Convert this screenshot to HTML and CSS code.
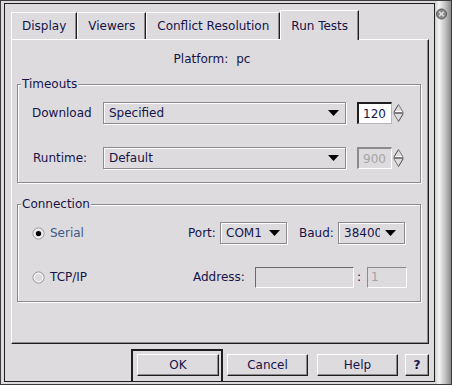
FILE: index.html
```html
<!DOCTYPE html>
<html lang="en">
<head>
    <meta charset="UTF-8">
    <title>Run Tests</title>
    <link rel="stylesheet" href="styles.css">
</head>
<body>
    <div class="window">
        <div class="frame">
            <div class="tabs">
                <div class="tab">Display</div>
                <div class="tab">Viewers</div>
                <div class="tab">Conflict Resolution</div>
                <div class="tab active">Run Tests</div>
            </div>

            <div class="panel">
                <div class="platform"><span>Platform:</span><span>pc</span></div>

                <fieldset class="group">
                    <legend>Timeouts</legend>
                    <div class="rows">
                        <div class="row">
                            <span class="label">Download</span>
                            <div class="combo wide">
                                <span class="value">Specified</span>
                                <svg class="arrow" width="11" height="6" viewBox="0 0 11 6"><path d="M0 0h11L5.5 6z"/></svg>
                            </div>
                            <div class="num">120</div>
                            <svg class="spin" width="11" height="20" viewBox="0 0 11 20">
                                <path d="M5.5 1.5L1 9" stroke="#4a4a4a" fill="none"/>
                                <path d="M5.5 1.5L10 9" stroke="#787878" fill="none"/>
                                <path d="M2 8.5h7" stroke="#fff"/>
                                <path d="M0.5 10h10" stroke="#1e1e1e"/>
                                <path d="M1 11l4.5 7.5" stroke="#787878" fill="none"/>
                                <path d="M10 11l-4.5 7.5" stroke="#4a4a4a" fill="none"/>
                            </svg>
                        </div>
                        <div class="row">
                            <span class="label runtime">Runtime:</span>
                            <div class="combo wide">
                                <span class="value">Default</span>
                                <svg class="arrow" width="11" height="6" viewBox="0 0 11 6"><path d="M0 0h11L5.5 6z"/></svg>
                            </div>
                            <div class="num off">900</div>
                            <svg class="spin" width="11" height="20" viewBox="0 0 11 20">
                                <path d="M5.5 1.5L1 9" stroke="#4a4a4a" fill="none"/>
                                <path d="M5.5 1.5L10 9" stroke="#787878" fill="none"/>
                                <path d="M2 8.5h7" stroke="#fff"/>
                                <path d="M0.5 10h10" stroke="#1e1e1e"/>
                                <path d="M1 11l4.5 7.5" stroke="#787878" fill="none"/>
                                <path d="M10 11l-4.5 7.5" stroke="#4a4a4a" fill="none"/>
                            </svg>
                        </div>
                    </div>
                </fieldset>

                <fieldset class="group connection">
                    <legend>Connection</legend>
                    <div class="rows">
                        <div class="row">
                            <div class="choice serial">
                                <svg class="radio" width="13" height="13" viewBox="0 0 13 13">
                                    <circle cx="6.5" cy="6.5" r="5.5" fill="none" stroke="#8c8a8c"/>
                                    <circle cx="6.5" cy="6.5" r="4.5" fill="none" stroke="#fff"/>
                                    <circle cx="6.5" cy="6.5" r="2.6" fill="#000"/>
                                </svg>
                                <span class="on">Serial</span>
                            </div>
                            <span class="lbl-port">Port:</span>
                            <div class="combo small">
                                <span class="value">COM1</span>
                                <svg class="arrow" width="11" height="6" viewBox="0 0 11 6"><path d="M0 0h11L5.5 6z"/></svg>
                            </div>
                            <span class="lbl-baud">Baud:</span>
                            <div class="combo small clip">
                                <span class="value">38400</span>
                                <svg class="arrow" width="11" height="6" viewBox="0 0 11 6"><path d="M0 0h11L5.5 6z"/></svg>
                            </div>
                        </div>
                        <div class="row">
                            <div class="choice tcp">
                                <svg class="radio" width="13" height="13" viewBox="0 0 13 13">
                                    <circle cx="6.5" cy="6.5" r="5.5" fill="none" stroke="#8c8a8c"/>
                                    <circle cx="6.5" cy="6.5" r="4.5" fill="none" stroke="#fff"/>
                                </svg>
                                <span>TCP/IP</span>
                            </div>
                            <span class="lbl-addr">Address:</span>
                            <div class="entry address"></div>
                            <span class="colon">:</span>
                            <div class="entry sub">1</div>
                        </div>
                    </div>
                </fieldset>
            </div>

            <div class="buttons">
                <div class="default">
                    <button class="btn">OK</button>
                </div>
                <button class="btn cancel">Cancel</button>
                <button class="btn help">Help</button>
                <button class="btn what">?</button>
            </div>
        </div>

        <div class="strip">
            <svg width="12" height="12" viewBox="0 0 12 12">
                <circle cx="5.5" cy="6" r="5" fill="#8a8a8a" stroke="#555"/>
                <path d="M3.2 3.7l4.6 4.6M7.8 3.7L3.2 8.3" stroke="#e4e4e4" stroke-width="1.4"/>
            </svg>
        </div>
    </div>
</body>
</html>
```

FILE: styles.css
```css
* {
    margin: 0;
    padding: 0;
    box-sizing: border-box;
}

body {
    background: #dedbde;
    color: #14144a;
    font-family: "DejaVu Sans", sans-serif;
    font-size: 12px;
    line-height: 14px;
}

.window {
    width: 452px;
    height: 385px;
    display: flex;
    border: 1px solid #3c3c3c;
    background: #dedbde;
}

.frame {
    width: 431px;
    margin: 2px 0 2px 3px;
    border: 1px solid #1e1e1e;
    display: flex;
    flex-direction: column;
}

.strip {
    flex: 1;
    padding: 7px 0 0 1px;
    background: linear-gradient(to right, #cfcfcf 0, #f4f4f4 4px, #c4c4c4 10px, #8a8a8a 100%);
}

.strip svg {
    display: block;
}

/* tabs */

.tabs {
    display: flex;
    align-items: flex-end;
    height: 29px;
    margin-top: 6px;
    padding-left: 6px;
}

.tab {
    height: 27px;
    padding: 6px 10px 0;
    border: 1px solid;
    border-color: #fff #1e1e1e transparent #fff;
    border-bottom: 0;
    box-shadow: inset -1px 0 #8c8a8c;
    white-space: nowrap;
}

.tab.active {
    height: 30px;
    margin-bottom: -1px;
    padding-top: 8px;
    position: relative;
    z-index: 1;
    background: #dedbde;
}

.panel {
    height: 305px;
    margin: 0 5px 0 6px;
    border: 1px solid;
    border-color: #fff #1e1e1e #1e1e1e #fff;
    box-shadow: inset -1px -1px #8c8a8c;
}

.platform {
    display: flex;
    justify-content: center;
    gap: 8px;
    margin-top: 12px;
    padding-right: 16px;
}

/* group boxes */

.group {
    margin: 11px 7px 0 5px;
    padding: 11px 0 13px;
    border: 1px solid #8c8a8c;
    box-shadow: inset 1px 1px #fff, 1px 1px #fff;
    min-width: 0;
}

.group legend {
    margin-left: 3px;
    padding: 0 1px;
    background: #dedbde;
}

.connection {
    margin-top: 14px;
}

.rows {
    padding-left: 14px;
}

.row {
    display: flex;
    align-items: center;
    height: 22px;
}

.row + .row {
    margin-top: 23px;
}

.connection .row + .row {
    margin-top: 22px;
}

.label {
    width: 71px;
}

.runtime {
    padding-left: 1px;
}

.combo {
    height: 22px;
    display: flex;
    align-items: center;
    gap: 6px;
    padding: 0 6px 0 5px;
    border: 1px solid #8c8a8c;
    box-shadow: inset 1px 1px #fff, 1px 1px #fff;
}

.combo .value {
    flex: 1;
    overflow: hidden;
    white-space: nowrap;
}

.combo .arrow {
    flex: none;
}

.clip {
    gap: 5px;
}

.clip .value {
    flex: none;
    width: 36px;
}

.wide {
    width: 243px;
}

.small {
    width: 67px;
}

.num {
    width: 35px;
    height: 22px;
    margin-left: 11px;
    padding: 3px 0 0 4px;
    background: #fff;
    border-style: solid;
    border-width: 2px 1px 1px 2px;
    border-color: #1e1e1e #b8b8b8 #b8b8b8 #1e1e1e;
}

.num.off {
    background: #dedbde;
    color: #a4a4a4;
    border-color: #8c8a8c #fff #fff #8c8a8c;
}

.spin {
    margin-left: 1px;
}

/* connection */

.choice {
    display: flex;
    align-items: center;
    gap: 5px;
}

.serial {
    width: 156px;
}

.tcp {
    width: 161px;
}

.on {
    color: #3a5a8a;
}

.lbl-port {
    width: 32px;
}

.lbl-baud {
    width: 39px;
    margin-left: 12px;
}

.lbl-addr {
    width: 62px;
}

.entry {
    height: 21px;
    padding: 2px 0 0 3px;
    border: 1px solid;
    border-color: #6a6a6a #fff #fff #6a6a6a;
    color: #a4a4a4;
}

.address {
    width: 99px;
}

.colon {
    width: 13px;
    padding-left: 3px;
}

.sub {
    width: 40px;
    border-color: #8c8a8c #fff #fff #8c8a8c;
}

/* buttons */

.buttons {
    flex: 1;
    display: flex;
    align-items: flex-start;
    justify-content: flex-end;
    padding-right: 5px;
}

.default {
    width: 92px;
    height: 32px;
    margin-top: 5px;
    padding: 3px 2px 0 4px;
    border: 2px solid #1e1e1e;
    border-bottom: 0;
}

.btn {
    width: 82px;
    height: 22px;
    background: #dedbde;
    color: inherit;
    font: inherit;
    border: 1px solid;
    border-color: #fff #1e1e1e #1e1e1e #fff;
    box-shadow: inset -1px -1px #8c8a8c;
}

.buttons > .btn {
    margin-top: 10px;
}

.cancel {
    width: 81px;
    margin-left: 4px;
}

.help {
    width: 81px;
    margin-left: 9px;
}

.what {
    width: 24px;
    margin-left: 7px;
    font-weight: bold;
}
```
